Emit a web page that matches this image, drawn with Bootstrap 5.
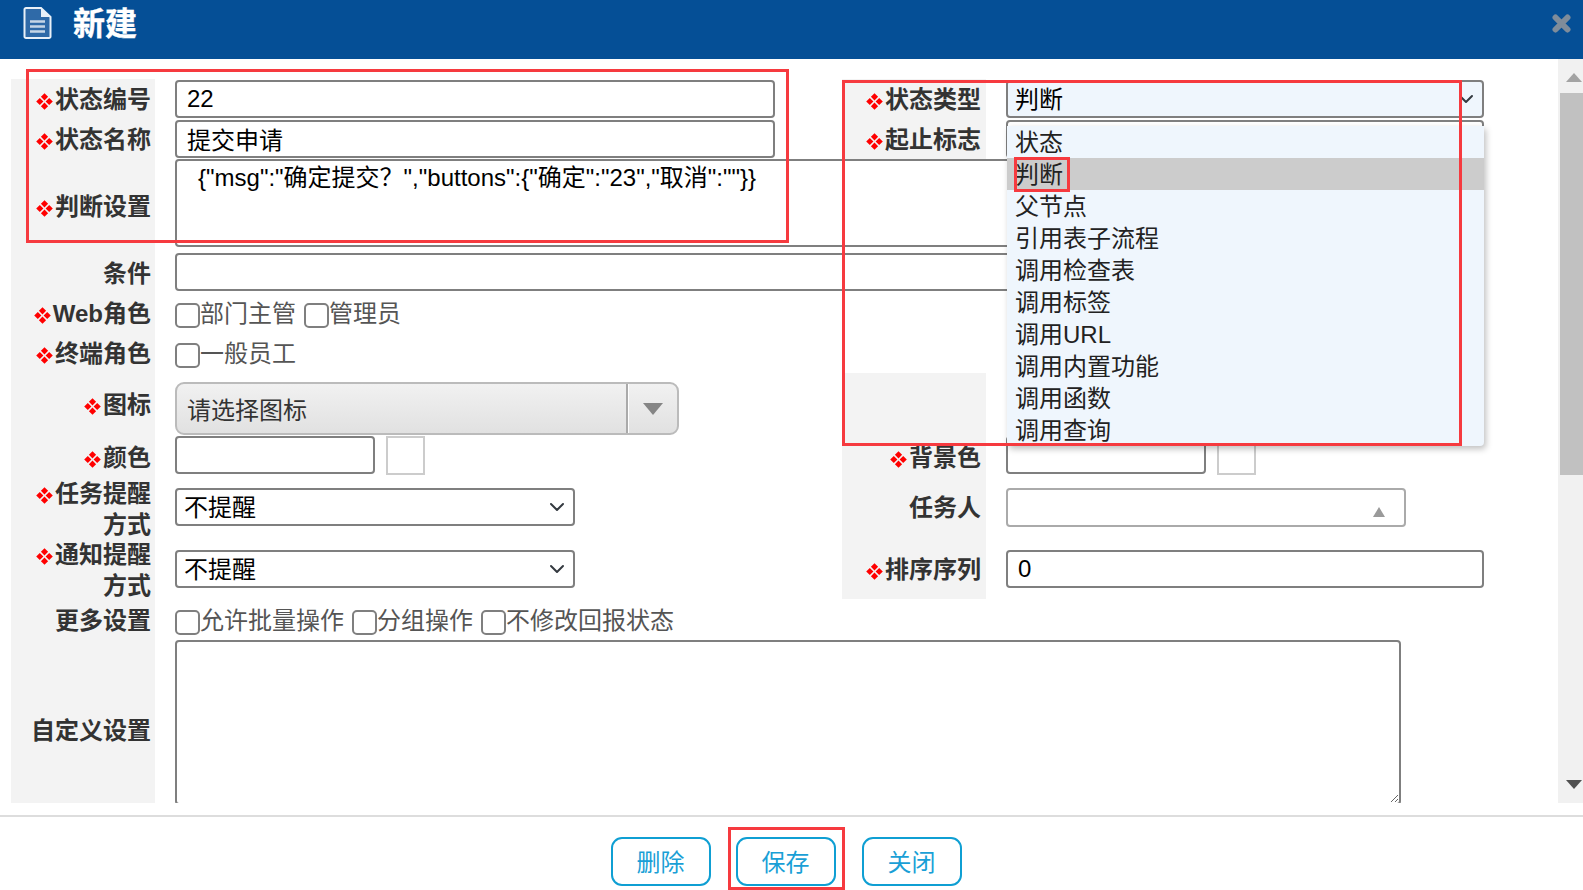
<!DOCTYPE html>
<html lang="zh-CN">
<head>
<meta charset="utf-8">
<title>新建</title>
<link href="https://cdn.jsdelivr.net/npm/bootstrap@5.3.0/dist/css/bootstrap.min.css" rel="stylesheet">
<style>
html,body{height:100%;margin:0;overflow:hidden;background:#fff}
body{font-family:"Liberation Sans","Noto Sans CJK SC",sans-serif;font-size:24px;line-height:31px;color:#333;position:relative}
.shell{height:890px}
.topbar{height:59px;background:#054f96;color:#fff;flex:none}
.topicon{margin:7px 0 0 23px;width:29px;height:32px}
.toptitle{font-size:32px;font-weight:700;line-height:48px;margin-left:21px;-webkit-text-stroke:.4px #fff}
.topclose{margin:14px 12px 0 auto;width:19px;height:19px}
.mainarea{height:744px;flex:none}
.pane{flex:1 1 auto;overflow:hidden;padding:20px 0 0 11px;min-width:0}
.formgrid{display:grid;grid-template-columns:144px 687px 144px 1fr;grid-template-rows:40px 40px 94px 40px 40px 40px 63px 42px 62px 59px 41px 180px}
.lab{background:#f3f3f3;font-weight:700;text-align:right;padding-right:5px;display:flex;align-items:center;justify-content:flex-end;color:#333}
.lab-l{padding-right:4px}
.lab span.inner{display:block}
.mk{width:17px;height:17px;margin-right:2px;vertical-align:-2px}
.val{padding-left:20px;display:flex;min-width:0}
.span3{grid-column:2 / span 3}
.val.mid{align-items:center}
.val.top{align-items:flex-start}
.fld.form-control,.fld.form-select{border:2px solid #7f7f7f;border-radius:4px;font-size:24px;line-height:31px;color:#000;padding:0 10px 1px;height:38px;min-height:0;box-shadow:none;font-family:inherit}
.fld.form-select{padding:0 7px;background-color:#fff;background-size:22px 16px;background-position:right 5px center}
.w-main{width:600px}
.w-full{width:1309px}
.w-custom{width:1226px}
.w-short{width:200px;flex:none}
.w-sel{width:400px}
.w-right{width:478px}
.txt1.form-control{height:88px;resize:none;padding:0 10px 0 21px;line-height:34px}
.txt2.form-control{height:165px}
.shift-up{margin-bottom:2px}
.row-down{padding-top:2px}
.chkitem{display:inline-flex;align-items:center;color:#555;margin-right:8px}
.chkitem .form-check-input{width:25px;height:25px;margin:4px 0 0;border:2px solid #7f7f7f;border-radius:5px;flex:none;background-color:#fff}
.comboicon{width:504px;height:53px;margin-top:9px;border:2px solid #bbb;border-radius:9px;background:linear-gradient(#f1f1f1,#e1e1e1);padding-left:10px;color:#333}
.comboicon .ctext{flex:1 1 auto;padding-top:4px}
.comboicon .cbtn{width:51px;height:100%;border-left:2px solid #aaa;box-shadow:inset 1px 0 0 #fff}
.swatch{width:39px;height:39px;border:2px solid #ccc;margin-left:11px;flex:none}
.mt10{margin-top:10px}
.picker{width:400px;height:39px;border:2px solid #aaa;border-radius:4px;background:#fff;padding:17px 19px 0 0}
.lab-up{padding-bottom:3px}
.bluebg.form-select{background-color:#eff6fd}
.typecell{position:relative}
.optmenu.dropdown-menu{position:absolute;display:block;left:21px;top:47px;width:477px;padding:0;margin:0;border:0;border-radius:0 0 4px 4px;background:#eff6fd;box-shadow:2px 3px 6px rgba(0,0,0,.25);z-index:5;font-size:24px}
.optmenu .dropdown-item{height:32px;line-height:33px;padding:0 8px;color:#222;background:transparent}
.optmenu .dropdown-item.sel{background:#ccc}
.sbar{width:25px;flex:none;background:#f1f1f1}
.sbar .upa{height:34px;padding:14px 1px 0 8px}
.sbar .thumb{height:382px;margin-left:2px;background:#c1c1c1}
.sbar .dna{margin-top:auto;padding:0 1px 14px 8px}
.footbar{margin-top:12px;border-top:2px solid #ddd;padding-top:20px;padding-right:11px;gap:25px}
.fbtn.btn{height:49px;width:100px;padding:3px 0 0;border:2px solid #0f9fd3;border-radius:11px;background:#fff;color:#1a9fd6;font-size:24px;line-height:40px}
.fbtn-last{margin-left:1px}
.redbox{position:absolute;border:3px solid #f63a3f;pointer-events:none;z-index:10}
.r1{left:26px;top:69px;width:763px;height:174px}
.r2{left:842px;top:80px;width:620px;height:366px}
.r3{left:1014px;top:157px;width:56px;height:35px}
.r4{left:728px;top:827px;width:117px;height:63px}
.defs-hold{width:0;height:0;position:absolute}
</style>
</head>
<body>
<svg class="defs-hold" aria-hidden="true"><defs>
  <symbol id="reqmark" viewBox="0 0 17 17">
    <path d="M8.5 .2l3.600 3.600-3.600 3.600-3.600-3.600zM8.500 9.600l3.600 3.600-3.600 3.600-3.600-3.600zM3.800 4.900l3.600 3.600-3.600 3.600-3.600-3.600zM13.200 4.900l3.600 3.600-3.600 3.600-3.600-3.600z" fill="#f00"/>
  </symbol>
</defs></svg>
<div class="shell d-flex flex-column">
  <header class="topbar d-flex align-items-start">
    <svg class="topicon" viewBox="0 0 29 32">
      <path d="M1.500 2.500a1.500 1.500 0 0 1 1.500-1.500h15l9.500 9v19.500a1.500 1.500 0 0 1-1.500 1.500H3a1.500 1.500 0 0 1-1.500-1.500z" fill="#2f6aa8" stroke="#e8f0f8" stroke-width="2"/>
      <path d="M18 1v9h9.500z" fill="#e8f0f8"/>
      <path d="M7 14.500h15M7 19.500h15M7 24.500h15" stroke="#c6d6e6" stroke-width="2.400"/>
    </svg>
    <div class="toptitle">新建</div>
    <svg class="topclose" viewBox="0 0 19 19"><path d="M3.500 3.500l12 12M15.500 3.500l-12 12" stroke="#7f8c9a" stroke-width="6" stroke-linecap="round"/></svg>
  </header>

  <div class="mainarea d-flex">
    <div class="pane">
      <form class="formgrid">
        <div class="lab lab-l"><span class="inner"><svg class="mk"><use href="#reqmark"/></svg>状态编号</span></div>
        <div class="val mid"><input class="form-control fld w-main" value="22"></div>
        <div class="lab"><span class="inner"><svg class="mk"><use href="#reqmark"/></svg>状态类型</span></div>
        <div class="val mid typecell">
          <select class="form-select fld bluebg w-right"><option>判断</option></select>
          <div class="dropdown-menu optmenu">
            <div class="dropdown-item">状态</div>
            <div class="dropdown-item sel">判断</div>
            <div class="dropdown-item">父节点</div>
            <div class="dropdown-item">引用表子流程</div>
            <div class="dropdown-item">调用检查表</div>
            <div class="dropdown-item">调用标签</div>
            <div class="dropdown-item">调用URL</div>
            <div class="dropdown-item">调用内置功能</div>
            <div class="dropdown-item">调用函数</div>
            <div class="dropdown-item">调用查询</div>
          </div>
        </div>

        <div class="lab lab-l"><span class="inner"><svg class="mk"><use href="#reqmark"/></svg>状态名称</span></div>
        <div class="val mid"><input class="form-control fld w-main" value="提交申请"></div>
        <div class="lab"><span class="inner"><svg class="mk"><use href="#reqmark"/></svg>起止标志</span></div>
        <div class="val mid"><select class="form-select fld w-right"><option></option></select></div>

        <div class="lab lab-l"><span class="inner"><svg class="mk"><use href="#reqmark"/></svg>判断设置</span></div>
        <div class="val top span3"><textarea class="form-control fld txt1 w-full">{"msg":"确定提交？","buttons":{"确定":"23","取消":""}}</textarea></div>

        <div class="lab lab-l">条件</div>
        <div class="val mid span3"><input class="form-control fld w-full shift-up"></div>

        <div class="lab lab-l"><span class="inner"><svg class="mk"><use href="#reqmark"/></svg>Web角色</span></div>
        <div class="val mid span3">
          <label class="chkitem"><input type="checkbox" class="form-check-input">部门主管</label>
          <label class="chkitem"><input type="checkbox" class="form-check-input">管理员</label>
        </div>

        <div class="lab lab-l"><span class="inner"><svg class="mk"><use href="#reqmark"/></svg>终端角色</span></div>
        <div class="val mid span3">
          <label class="chkitem"><input type="checkbox" class="form-check-input">一般员工</label>
        </div>

        <div class="lab lab-l"><span class="inner"><svg class="mk"><use href="#reqmark"/></svg>图标</span></div>
        <div class="val top">
          <div class="comboicon d-flex align-items-center">
            <div class="ctext">请选择图标</div>
            <div class="cbtn d-flex align-items-center justify-content-center">
              <svg width="20" height="12" viewBox="0 0 20 12"><path d="M0 0h20l-10 12z" fill="#858585"/></svg>
            </div>
          </div>
        </div>
        <div class="lab"></div>
        <div class="val"></div>

        <div class="lab lab-l"><span class="inner"><svg class="mk"><use href="#reqmark"/></svg>颜色</span></div>
        <div class="val top"><input class="form-control fld w-short"><div class="swatch"></div></div>
        <div class="lab"><span class="inner"><svg class="mk"><use href="#reqmark"/></svg>背景色</span></div>
        <div class="val top"><input class="form-control fld w-short"><div class="swatch"></div></div>

        <div class="lab lab-l"><span class="inner"><svg class="mk"><use href="#reqmark"/></svg>任务提醒<br>方式</span></div>
        <div class="val top"><select class="form-select fld w-sel mt10"><option>不提醒</option></select></div>
        <div class="lab lab-up">任务人</div>
        <div class="val top">
          <div class="picker mt10 d-flex justify-content-end align-items-start">
            <svg width="12" height="10" viewBox="0 0 12 10"><path d="M6 0l6 10H0z" fill="#9a9a9a"/></svg>
          </div>
        </div>

        <div class="lab lab-l"><span class="inner"><svg class="mk"><use href="#reqmark"/></svg>通知提醒<br>方式</span></div>
        <div class="val top"><select class="form-select fld w-sel mt10"><option>不提醒</option></select></div>
        <div class="lab"><span class="inner"><svg class="mk"><use href="#reqmark"/></svg>排序序列</span></div>
        <div class="val top"><input class="form-control fld w-right mt10" value="0"></div>

        <div class="lab lab-l row-down">更多设置</div>
        <div class="val mid span3 row-down">
          <label class="chkitem"><input type="checkbox" class="form-check-input">允许批量操作</label>
          <label class="chkitem"><input type="checkbox" class="form-check-input">分组操作</label>
          <label class="chkitem"><input type="checkbox" class="form-check-input">不修改回报状态</label>
        </div>

        <div class="lab lab-l">自定义设置</div>
        <div class="val top span3"><textarea class="form-control fld txt2 w-custom"></textarea></div>
      </form>
    </div>
    <div class="sbar d-flex flex-column">
      <div class="upa"><svg class="d-block" width="16" height="9" viewBox="0 0 16 9"><path d="M8 0l8 9H0z" fill="#a3a3a3"/></svg></div>
      <div class="thumb"></div>
      <div class="dna"><svg class="d-block" width="16" height="9" viewBox="0 0 16 9"><path d="M0 0h16l-8 9z" fill="#505050"/></svg></div>
    </div>
  </div>

  <footer class="footbar d-flex justify-content-center">
    <button type="button" class="btn fbtn">删除</button>
    <button type="button" class="btn fbtn">保存</button>
    <button type="button" class="btn fbtn fbtn-last">关闭</button>
  </footer>
</div>
<div class="redbox r1"></div>
<div class="redbox r2"></div>
<div class="redbox r3"></div>
<div class="redbox r4"></div>
<script src="https://cdn.jsdelivr.net/npm/bootstrap@5.3.0/dist/js/bootstrap.bundle.min.js"></script>
</body>
</html>
